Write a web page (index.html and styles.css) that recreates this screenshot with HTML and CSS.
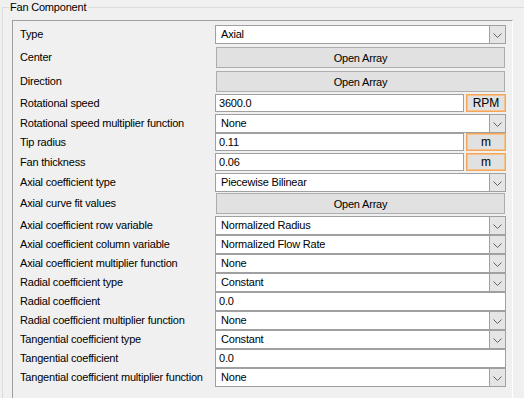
FILE: index.html
```html
<!DOCTYPE html>
<html>
<head>
<meta charset="utf-8">
<link rel="stylesheet" href="styles.css">
</head>
<body>
<div class="group">
  <div class="legend">Fan Component</div>
  <div class="panel">
    <div class="row h22"><span class="lbl">Type</span><div class="combo"><span class="val">Axial</span><span class="arrow"><svg width="9" height="5" viewBox="0 0 9 5"><path d="M0.5 0.5 L4.5 4.5 L8.5 0.5" fill="none" stroke="#606060" stroke-width="1"/></svg></span></div></div>
    <div class="row b h24"><span class="lbl">Center</span><button class="btn">Open Array</button></div>
    <div class="row b h23"><span class="lbl">Direction</span><button class="btn">Open Array</button></div>
    <div class="row u h20"><span class="lbl">Rotational speed</span><div class="pair"><div class="input">3600.0</div><button class="unit">RPM</button></div></div>
    <div class="row h19"><span class="lbl">Rotational speed multiplier function</span><div class="combo"><span class="val">None</span><span class="arrow"><svg width="9" height="5" viewBox="0 0 9 5"><path d="M0.5 0.5 L4.5 4.5 L8.5 0.5" fill="none" stroke="#606060" stroke-width="1"/></svg></span></div></div>
    <div class="row u h20"><span class="lbl">Tip radius</span><div class="pair"><div class="input">0.11</div><button class="unit">m</button></div></div>
    <div class="row u h20"><span class="lbl">Fan thickness</span><div class="pair"><div class="input">0.06</div><button class="unit">m</button></div></div>
    <div class="row h20"><span class="lbl">Axial coefficient type</span><div class="combo"><span class="val">Piecewise Bilinear</span><span class="arrow"><svg width="9" height="5" viewBox="0 0 9 5"><path d="M0.5 0.5 L4.5 4.5 L8.5 0.5" fill="none" stroke="#606060" stroke-width="1"/></svg></span></div></div>
    <div class="row b h23"><span class="lbl">Axial curve fit values</span><button class="btn">Open Array</button></div>
    <div class="row h19"><span class="lbl">Axial coefficient row variable</span><div class="combo"><span class="val">Normalized Radius</span><span class="arrow"><svg width="9" height="5" viewBox="0 0 9 5"><path d="M0.5 0.5 L4.5 4.5 L8.5 0.5" fill="none" stroke="#606060" stroke-width="1"/></svg></span></div></div>
    <div class="row h19"><span class="lbl">Axial coefficient column variable</span><div class="combo"><span class="val">Normalized Flow Rate</span><span class="arrow"><svg width="9" height="5" viewBox="0 0 9 5"><path d="M0.5 0.5 L4.5 4.5 L8.5 0.5" fill="none" stroke="#606060" stroke-width="1"/></svg></span></div></div>
    <div class="row h19"><span class="lbl">Axial coefficient multiplier function</span><div class="combo"><span class="val">None</span><span class="arrow"><svg width="9" height="5" viewBox="0 0 9 5"><path d="M0.5 0.5 L4.5 4.5 L8.5 0.5" fill="none" stroke="#606060" stroke-width="1"/></svg></span></div></div>
    <div class="row h19"><span class="lbl">Radial coefficient type</span><div class="combo"><span class="val">Constant</span><span class="arrow"><svg width="9" height="5" viewBox="0 0 9 5"><path d="M0.5 0.5 L4.5 4.5 L8.5 0.5" fill="none" stroke="#606060" stroke-width="1"/></svg></span></div></div>
    <div class="row h19"><span class="lbl">Radial coefficient</span><div class="input full">0.0</div></div>
    <div class="row h19"><span class="lbl">Radial coefficient multiplier function</span><div class="combo"><span class="val">None</span><span class="arrow"><svg width="9" height="5" viewBox="0 0 9 5"><path d="M0.5 0.5 L4.5 4.5 L8.5 0.5" fill="none" stroke="#606060" stroke-width="1"/></svg></span></div></div>
    <div class="row h19"><span class="lbl">Tangential coefficient type</span><div class="combo"><span class="val">Constant</span><span class="arrow"><svg width="9" height="5" viewBox="0 0 9 5"><path d="M0.5 0.5 L4.5 4.5 L8.5 0.5" fill="none" stroke="#606060" stroke-width="1"/></svg></span></div></div>
    <div class="row h19"><span class="lbl">Tangential coefficient</span><div class="input full">0.0</div></div>
    <div class="row h19"><span class="lbl">Tangential coefficient multiplier function</span><div class="combo"><span class="val">None</span><span class="arrow"><svg width="9" height="5" viewBox="0 0 9 5"><path d="M0.5 0.5 L4.5 4.5 L8.5 0.5" fill="none" stroke="#606060" stroke-width="1"/></svg></span></div></div>
  </div>
</div>
</body>
</html>
```

FILE: styles.css
```css
html, body {
  margin: 0;
  padding: 0;
  background: #f0f0f0;
  overflow: hidden;
}
body {
  font-family: "Liberation Sans", Arial, sans-serif;
  font-size: 11px;
  letter-spacing: -0.2px;
  color: #000;
  width: 524px;
  height: 398px;
}
.group {
  position: relative;
  box-sizing: border-box;
  margin: 7px 0 0 2px;
  border-top: 1px solid #dcdcdc;
  border-left: 1px solid #dcdcdc;
  padding: 12px 0 0 9px;
  height: 391px;
}
.legend {
  position: absolute;
  left: 6px;
  top: -8px;
  padding: 0 2px 0 1px;
  background: #f0f0f0;
  line-height: 14px;
}
.panel {
  box-sizing: border-box;
  width: 501px;
  height: 378px;
  border-top: 1px solid #a0a0a0;
  border-left: 1px solid #a0a0a0;
  border-right: 1px solid #ffffff;
  padding: 4px 6px 0 7px;
  display: flex;
  flex-direction: column;
}
.row {
  display: grid;
  grid-template-columns: 195px 1fr;
  align-items: start;
  flex: none;
}
.h19 { height: 19px; }
.h20 { height: 20px; }
.h22 { height: 22px; }
.h23 { height: 23px; }
.h24 { height: 24px; }
.lbl {
  line-height: 19px;
  white-space: nowrap;
}
.row.b .lbl { line-height: 21px; }
.row.u .lbl { line-height: 18px; }
.combo {
  box-sizing: border-box;
  height: 19px;
  border: 1px solid #a0a0a0;
  background: #fff;
  display: flex;
  align-items: stretch;
}
.combo .val {
  flex: 1;
  padding-left: 5px;
  line-height: 17px;
}
.combo .arrow {
  width: 16px;
  box-sizing: border-box;
  background: #e5e5e5;
  border-left: 1px solid #a0a0a0;
  display: flex;
  align-items: center;
  justify-content: center;
  padding-top: 1px;
}
.btn {
  box-sizing: border-box;
  margin: 0 1px;
  height: 21px;
  border: 1px solid #adadad;
  background: #e1e1e1;
  font: inherit;
  letter-spacing: inherit;
  color: #000;
  padding: 0;
}
.pair {
  display: flex;
  gap: 2px;
}
.input {
  box-sizing: border-box;
  height: 18px;
  border: 1px solid #a0a0a0;
  background: #fff;
  padding-left: 3px;
  line-height: 16px;
  flex: 1;
}
.input.full { height: 19px; line-height: 17px; }
.unit {
  box-sizing: border-box;
  width: 40px;
  height: 18px;
  border: 1px solid #f3a65a;
  box-shadow: inset 0 0 0 1px #f7c18a;
  background: #e1e1e1;
  font: inherit;
  font-size: 12px;
  letter-spacing: 0;
  color: #000;
  padding: 0;
}
```
